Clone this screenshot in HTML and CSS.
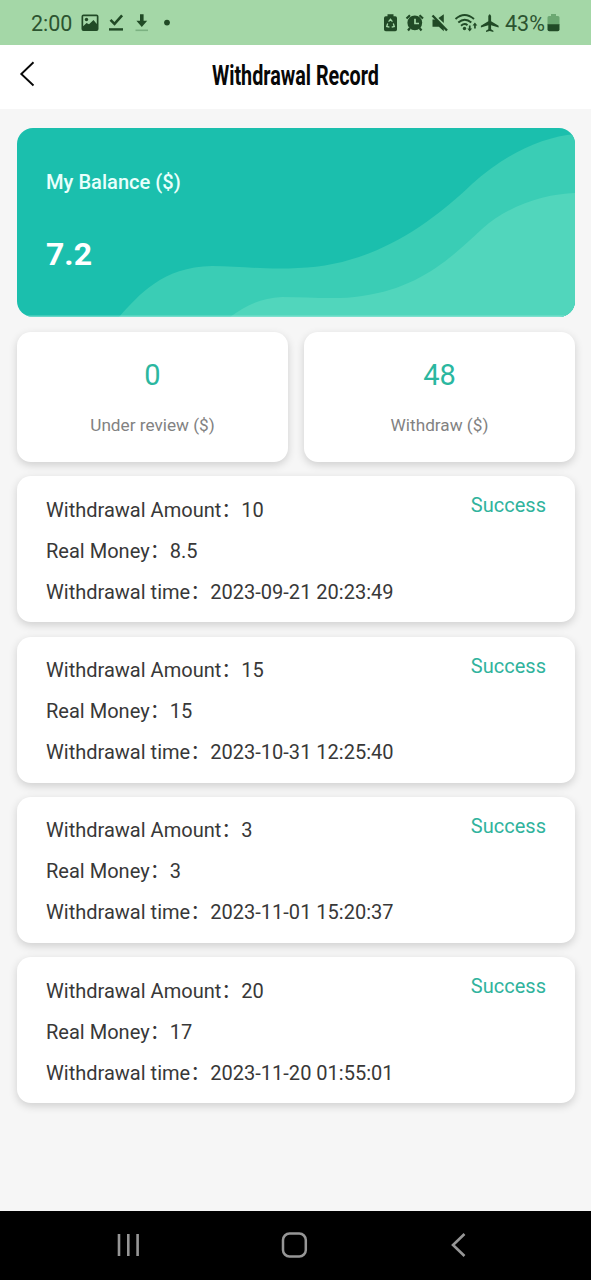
FILE: index.html
```
<!DOCTYPE html>
<html lang="en">
<head>
<meta charset="utf-8">
<title>Withdrawal Record</title>
<link rel="stylesheet" href="styles.css">
</head>
<body>
<div class="screen">
  <div class="status">
    <span class="clock">2:00</span>
    <svg class="left-icons" width="92" height="24" viewBox="80 11 92 24">
      <path fill="#214a26" fill-rule="evenodd" d="M83.500 14.500h13a2 2 0 0 1 2 2v12.500a2 2 0 0 1-2 2h-13a2 2 0 0 1-2-2v-12.500a2 2 0 0 1 2-2zM83.200 16.200v10l3.300-3.200 2.500 1.300 4.500-4.200 3.300 4v-7.900z"/>
      <circle cx="86.500" cy="19.500" r="1.700" fill="#214a26"/>
      <path d="M110.500 19.800l4 4 7.600-8.400" fill="none" stroke="#214a26" stroke-width="2.600"/>
      <path d="M109 28.200h14v2.400h-14z" fill="#214a26"/>
      <path d="M140 14.200h3.600v6.500h3.600l-5.400 6.200-5.400-6.200h3.600z" fill="#214a26"/>
      <path d="M135.500 29.500h12.500v1.600h-12.500z" fill="#7bb181"/>
      <circle cx="167" cy="22.600" r="2.900" fill="#214a26"/>
    </svg>
    <svg class="right-icons" width="120" height="24" viewBox="382 11 120 24">
      <path d="M387.500 14.200h6v2h1.800q1.700 0 1.700 1.700v11.600q0 1.700-1.700 1.700h-9.500q-1.800 0-1.800-1.700v-11.600q0-1.700 1.800-1.700h1.700z" fill="#214a26"/>
      <path d="M388.600 21.600l1.900-2.400 1.900 2.400M393.300 23.500l1 3-2.600.6M389.400 27.100l-2.700-.6 1-3" fill="none" stroke="#a4d7a7" stroke-width="1.300"/>
      <circle cx="414.800" cy="22.800" r="7.400" fill="#214a26"/>
      <path d="M406.500 18.500l3.500-3.200M423 18.500l-3.500-3.200M410 28l-2 2.500M419.500 28l2 2.500" stroke="#214a26" stroke-width="2.200"/>
      <path d="M415 18.700v4.800h4" fill="none" stroke="#a4d7a7" stroke-width="1.700"/>
      <path d="M432.500 19.500h4.500l6.800 7v4.700l-5-4.500h-6.300zM438.500 18l5.300-3.700v8.700z" fill="#214a26"/>
      <path d="M432.500 15.500l14.500 15" stroke="#214a26" stroke-width="2.400"/>
      <path d="M455.500 19q9-8 18.500 0M458.300 22.500q6.500-5.700 13 0M461 25.700q3.600-3 6.500-.5" fill="none" stroke="#214a26" stroke-width="1.900"/>
      <circle cx="464.500" cy="28.500" r="1.700" fill="#214a26"/>
      <path d="M468.900 25.500h1.700v3h1.500l-2.400 3-2.400-3h1.600zM474.100 28.500h1.700v-3h1.500l-2.400-3-2.400 3h1.600z" fill="#214a26"/>
      <path d="M488.300 16q1.400-3.500 2.800 0v5.200l7.500 4.500v1.900l-7.500-2.300v3.900l2.300 1.500v1.200l-3.700-1-3.700 1v-1.200l2.300-1.500v-3.900l-7.400 2.300v-1.900l7.400-4.500z" fill="#214a26"/>
    </svg>
    <span class="percent">43%</span>
    <svg class="battery" width="13" height="20" viewBox="547 13 13 20">
      <path d="M551 14h5v2h2q1.500 0 1.500 1.500V25h-12v-7.500q0-1.500 1.500-1.500h2z" fill="#6ca872"/>
      <path d="M547.500 24.300h12v5.200q0 1.800-1.800 1.800h-8.400q-1.800 0-1.800-1.800z" fill="#214a26"/>
    </svg>
  </div>
  <header class="header">
    <svg class="back" width="20" height="28" viewBox="0 0 20 28"><path d="M15.500 2.300L3.300 14l12.200 11.500" fill="none" stroke="#080808" stroke-width="1.900"/></svg>
    <h1 class="title"><span class="title-text">Withdrawal Record</span></h1>
  </header>
  <main class="content">
    <section class="balance">
      <svg class="waves" width="558" height="189" viewBox="17 128 558 189" preserveAspectRatio="none">
        <path d="M119 317C139 295 162 267 212 266C240 266 265 270 298 268C365 266 422 232 472 184C505 154 542 137 575 134V317z" fill="#3acdb5"/>
        <path d="M230 317C245 306 260 298 282 297C310 297 338 300 362 296C420 288 452 257 482 229C510 204 546 194 575 193V317z" fill="#51d6bc"/>
        <path d="M17 316.300H575" stroke="#9be8dc" stroke-opacity=".6" stroke-width="1.500"/>
      </svg>
      <div class="balance-body">
        <div class="balance-label">My Balance ($)</div>
        <div class="balance-value">7.2</div>
      </div>
    </section>
    <section class="stats">
      <div class="card stat"><div class="stat-value">0</div><div class="stat-label">Under review ($)</div></div>
      <div class="card stat"><div class="stat-value">48</div><div class="stat-label">Withdraw ($)</div></div>
    </section>
    <section class="records">
      <article class="card record"><div class="lines"><div>Withdrawal Amount：10</div><div>Real Money：8.5</div><div>Withdrawal time：2023-09-21 20:23:49</div></div><div class="state">Success</div></article>
      <article class="card record"><div class="lines"><div>Withdrawal Amount：15</div><div>Real Money：15</div><div>Withdrawal time：2023-10-31 12:25:40</div></div><div class="state">Success</div></article>
      <article class="card record"><div class="lines"><div>Withdrawal Amount：3</div><div>Real Money：3</div><div>Withdrawal time：2023-11-01 15:20:37</div></div><div class="state">Success</div></article>
      <article class="card record"><div class="lines"><div>Withdrawal Amount：20</div><div>Real Money：17</div><div>Withdrawal time：2023-11-20 01:55:01</div></div><div class="state">Success</div></article>
    </section>
  </main>
  <nav class="nav">
    <svg width="26" height="28" viewBox="0 0 26 28"><path d="M4 3v22M13.300 3v22M22.600 3v22" stroke="#969696" stroke-width="2.600"/></svg>
    <svg width="28" height="28" viewBox="0 0 28 28"><rect x="2" y="2.600" width="22.800" height="22.800" rx="6.500" fill="none" stroke="#969696" stroke-width="2.500"/></svg>
    <svg width="20" height="28" viewBox="0 0 20 28"><path d="M15.500 3L4 14l11.500 11" fill="none" stroke="#969696" stroke-width="2.600"/></svg>
  </nav>
</div>
</body>
</html>
```
FILE: styles.css
```
* { box-sizing: border-box; }
body {
  margin: 0;
  background: #f6f6f6;
  font-family: Roboto, "Noto Sans CJK SC", sans-serif;
  color: #383838;
}
.screen {
  width: 591px;
  height: 1280px;
  display: flex;
  flex-direction: column;
  overflow: hidden;
}
.status {
  flex: none;
  height: 45px;
  background: #a4d7a7;
  color: #2c5430;
  display: flex;
  align-items: flex-start;
  padding: 11px 31px 0;
  font-size: 21.5px;
  line-height: 26px;
}
.clock { width: 49px; }
.right-icons { margin-left: 210px; }
.percent { margin-left: 3px; width: 42px; white-space: nowrap; font-size: 21.5px; }
.battery { margin-top: 2px; }
.status svg { flex: none; }
.header {
  flex: none;
  height: 64px;
  background: #fff;
  display: grid;
  grid-template-columns: 40px 1fr 40px;
  align-items: center;
  padding: 0 18px;
}
.back { margin-top: -7px; }
.title {
  margin: -2px 0 0;
  color: #080808;
  font-size: 28px;
  line-height: 40px;
  font-weight: 700;
  text-align: center;
}
.title-text { display: inline-block; transform: scaleX(.705); white-space: nowrap; }
.content { flex: 1; padding: 19px 16px 0 17px; }
.balance {
  display: grid;
  height: 189px;
  border-radius: 16px;
  background: #1bbfad;
  overflow: hidden;
}
.waves, .balance-body { grid-area: 1 / 1; }
.balance-body { padding: 40px 29px; color: #e9fffc; z-index: 1; }
.balance-label { font-size: 20.1px; line-height: 28px; font-weight: 500; }
.balance-value { margin-top: 37px; font-size: 32px; line-height: 42px; font-weight: 700; color: #fff; }
.card {
  background: #fff;
  border-radius: 14px;
  box-shadow: 0 3px 8px rgba(0, 0, 0, .16);
}
.stats { display: grid; grid-template-columns: 271px 271px; gap: 16px; margin-top: 15px; }
.stat { height: 129.500px; padding-top: 22px; text-align: center; }
.stat-value { font-size: 29px; line-height: 42px; color: #2bb7a0; }
.stat-label { margin-top: 17px; font-size: 17.2px; line-height: 24px; color: #828282; }
.records { display: flex; flex-direction: column; gap: 14.400px; margin-top: 14.700px; }
.record { display: flex; justify-content: space-between; height: 146px; padding: 13px 29px; font-size: 20.05px; }
.lines { line-height: 41px; padding-top: .5px; }
.state { line-height: 33px; color: #30b39d; }
.nav {
  flex: none;
  height: 69px;
  background: #000;
  display: flex;
  justify-content: space-between;
  align-items: center;
  padding: 0 122px 1px 115px;
}
```
